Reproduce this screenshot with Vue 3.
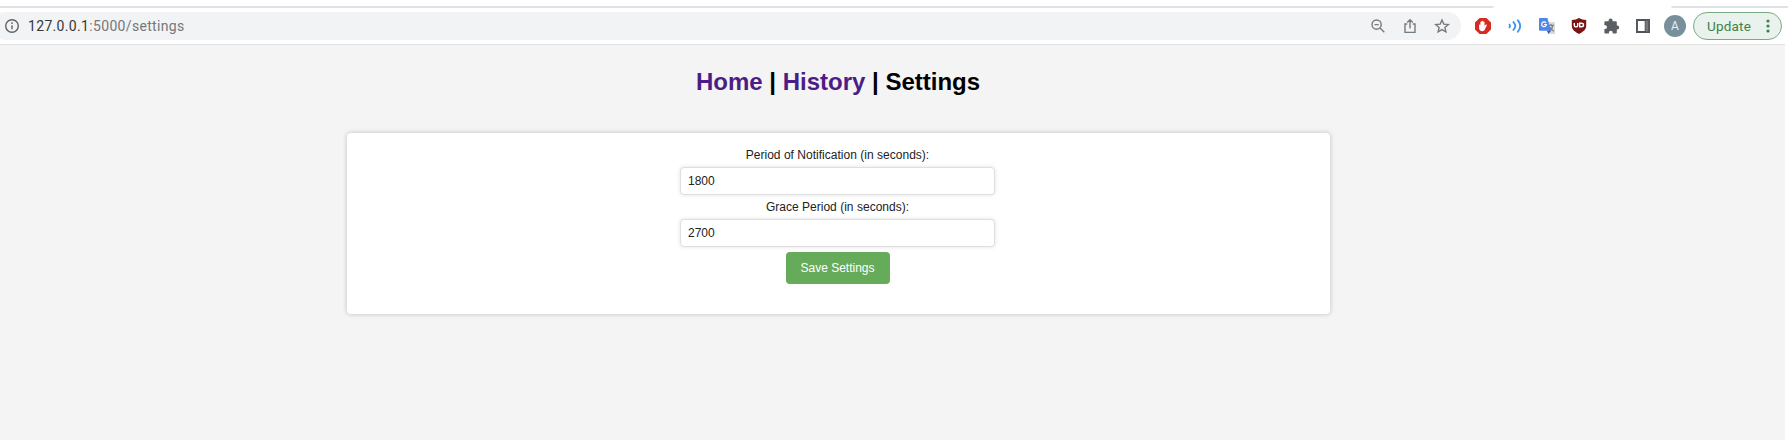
<script setup>
import { ref } from 'vue'

const period = ref('1800')
const grace = ref('2700')
</script>

<template>
  <div class="window">
    <div class="tabs"><i class="strip left"></i><i class="strip right"></i></div>
    <header class="toolbar">
      <div class="omnibox">
        <svg class="info" viewBox="0 0 16 16"><circle cx="8" cy="8" r="6.3" /><path d="M8 7.2v4.1M8 4.3v1.6" /></svg>
        <span class="url"><b>127.0.0.1</b>:5000/settings</span>
        <div class="actions">
          <svg viewBox="0 0 16 16"><circle cx="6.6" cy="6.6" r="4.6" /><path d="M10 10l4.3 4.3M4.5 6.6h4.2" /></svg>
          <svg viewBox="0 0 16 16"><path d="M5.2 6H3v8.4h10V6h-2.2M8 10.5V2M5.2 4.6L8 1.8l2.8 2.8" /></svg>
          <svg viewBox="0 0 16 16"><path d="M8 2l1.8 4.1 4.5.4-3.4 3 1 4.4L8 11.6l-3.9 2.3 1-4.4-3.4-3 4.5-.4z" /></svg>
        </div>
      </div>
      <div class="extensions">
        <svg viewBox="0 0 18 18">
          <path fill="#d52b22" d="M5.6 1h6.8L17 5.6v6.8L12.4 17H5.6L1 12.4V5.6z" />
          <path fill="#fff" d="M5.1 8.1c0-.9 1.2-.9 1.3 0V5.2c0-.9 1.3-.9 1.3 0V4.3c0-.9 1.4-.9 1.4 0v.8c0-.9 1.4-.9 1.4 0v4l1-1.3c.6-.8 1.7-.2 1.2.7l-1.9 4c-.5 1.2-1.2 1.7-2.4 1.7-2.1 0-3.3-1.2-3.3-3.2z" />
        </svg>
        <svg viewBox="0 0 18 18" fill="none" stroke="#3c95f5" stroke-width="1.9" stroke-linecap="round">
          <path d="M3.5 7.6q1.2 1.4 0 2.8" /><path d="M7.4 5.1q3.9 3.9 0 7.8" /><path d="M11.9 3.3q4.6 5.7 0 11.4" />
        </svg>
        <svg viewBox="0 0 18 18">
          <path fill="#dadada" d="M8 5h8.2q.8 0 .8.8V17h-6.5z" />
          <path fill="none" stroke="#74858b" stroke-width="1.2" d="M10.5 8.4H16M13.1 7v1.4M11.2 14.3q3.2-2.2 3.4-5.7M12 10.3q1.2 2.7 4 4" />
          <path fill="#5186ec" d="M1.8 1h7.6l3.6 12.7H1.8Q1 13.7 1 12.9V1.8Q1 1 1.8 1z" />
          <path fill="#3459bd" d="M8.8 13.7H13L10.5 17z" />
          <path fill="none" stroke="#fff" stroke-width="1.2" d="M8 5.8a2.4 2.4 0 1 0 .5 1.7H6.2" />
        </svg>
        <svg viewBox="0 0 18 18">
          <path fill="#7b1414" d="M9 1q3 2 7.2 2v5.8c0 4-3.5 6.4-7.2 8.2-3.7-1.8-7.2-4.2-7.2-8.2V3Q6 3 9 1z" />
          <path fill="none" stroke="#fff" stroke-width="1.4" d="M4.3 6v2.4q0 1.5 1.7 1.5t1.7-1.5V6M9.7 6.2v3.5h1.6q2.2 0 2.2-1.8t-2.2-1.7z" />
        </svg>
        <svg viewBox="0 0 18 18">
          <path fill="#5b5f64" d="M3.4 4.3h3.2V3.5a2 2 0 0 1 4 0v.8h3.2q1 0 1 1v3.1h.4a2 2 0 0 1 0 4h-.4v3q0 1-1 1H10.7v-.7a1.9 1.9 0 0 0-3.8 0v.7H3.4q-1 0-1-1V12h.7a1.9 1.9 0 0 0 0-3.8h-.7V5.3q0-1 1-1z" />
        </svg>
        <svg viewBox="0 0 18 18"><path fill="#fff" stroke="#4f545a" stroke-width="1.9" d="M3 3h12v12H3z" /><path fill="#747a80" stroke="#4f545a" d="M11.2 3h3.6v12h-3.6z" /></svg>
      </div>
      <div class="avatar">A</div>
      <div class="update"><span>Update</span><svg viewBox="0 0 4 16"><circle cx="2" cy="3" r="1.6" /><circle cx="2" cy="8" r="1.6" /><circle cx="2" cy="13" r="1.6" /></svg></div>
    </header>

    <main class="page">
      <h1><a>Home</a> | <a>History</a> | Settings</h1>
      <form class="card" @submit.prevent>
        <label for="period">Period of Notification (in seconds):</label>
        <input id="period" v-model="period" type="text" />
        <label for="grace">Grace Period (in seconds):</label>
        <input id="grace" v-model="grace" type="text" />
        <button type="submit">Save Settings</button>
      </form>
    </main>
  </div>
</template>

<style>
body { margin: 0; background: #fff; }
</style>

<style scoped>
.window { width: 1788px; height: 442px; overflow: hidden; background: #fff; font-family: "Liberation Sans", Arial, sans-serif; }
.tabs { height: 8px; display: flex; justify-content: space-between; align-items: flex-end; }
.strip { height: 2px; background: #dfe1e5; }
.left { width: 1494px; border-radius: 0 0 2px 0; }
.right { width: 117px; border-radius: 0 0 0 2px; }
.toolbar { height: 36px; box-sizing: border-box; padding: 4px 6px 4px 0; display: flex; align-items: center; }
.omnibox { width: 1469px; height: 28px; margin-left: -8px; box-sizing: border-box; padding: 0 11px 0 12px; border-radius: 14px; background: #f1f3f4; display: flex; align-items: center; flex: none; }
.info { width: 16px; height: 16px; fill: none; stroke: #5f6368; stroke-width: 1.4; }
.url { margin-left: 8px; font: 14px/20px Roboto, sans-serif; letter-spacing: .33px; color: #74777b; white-space: nowrap; }
.url b { font-weight: 400; color: #35383c; }
.actions { margin-left: auto; display: flex; gap: 16px; }
.actions svg { width: 16px; height: 16px; fill: none; stroke: #777b80; stroke-width: 1.4; }
.extensions { display: flex; gap: 14px; margin-left: 13px; }
.extensions svg { width: 18px; height: 18px; }
.avatar { width: 22px; height: 22px; margin-left: 12px; border-radius: 50%; background: #78909c; color: #e8edf0; font: 12px/22px Roboto, sans-serif; text-align: center; }
.update { margin-left: auto; width: 89px; height: 28px; box-sizing: border-box; padding: 0 11px 0 13px; border: 1px solid #79ab83; border-radius: 14px; background: #e9f2ec; display: flex; align-items: center; justify-content: space-between; font: 13.5px/20px Roboto, sans-serif; letter-spacing: .2px; color: #3d8149; }
.update svg { width: 4px; height: 16px; fill: #3d8149; }
.page { width: 1785px; height: 396px; box-sizing: border-box; padding: 23px 108px 0 0; border-top: 1px solid #e2e2e2; background: #f4f4f4; display: flex; flex-direction: column; align-items: center; }
h1 { margin: 0 1px 0 0; font-size: 24px; line-height: 28px; font-weight: 700; color: #000; white-space: nowrap; }
h1 a { color: #4b1d86; }
.card { width: 983px; height: 181px; margin-top: 37px; box-sizing: border-box; padding: 14px 2px 0 0; border-radius: 4px; background: #fff; box-shadow: 0 0 5px rgba(0, 0, 0, .22); display: flex; flex-direction: column; align-items: center; }
label { height: 20px; font-size: 12px; line-height: 16px; letter-spacing: .02px; color: #222; }
input { width: 315px; height: 28px; margin: 0 0 4px; padding: 0 7px; box-sizing: border-box; border: 1px solid #dfdfdf; border-radius: 4px; background: #fff; box-shadow: 0 0 4px rgba(0, 0, 0, .12); font: 12px "Liberation Sans", Arial, sans-serif; color: #222; }
button { width: 104px; height: 32px; margin-top: 1px; padding: 0; border: 0; border-radius: 4px; background: #66ab5a; color: #fff; font: 12px "Liberation Sans", Arial, sans-serif; }
</style>
